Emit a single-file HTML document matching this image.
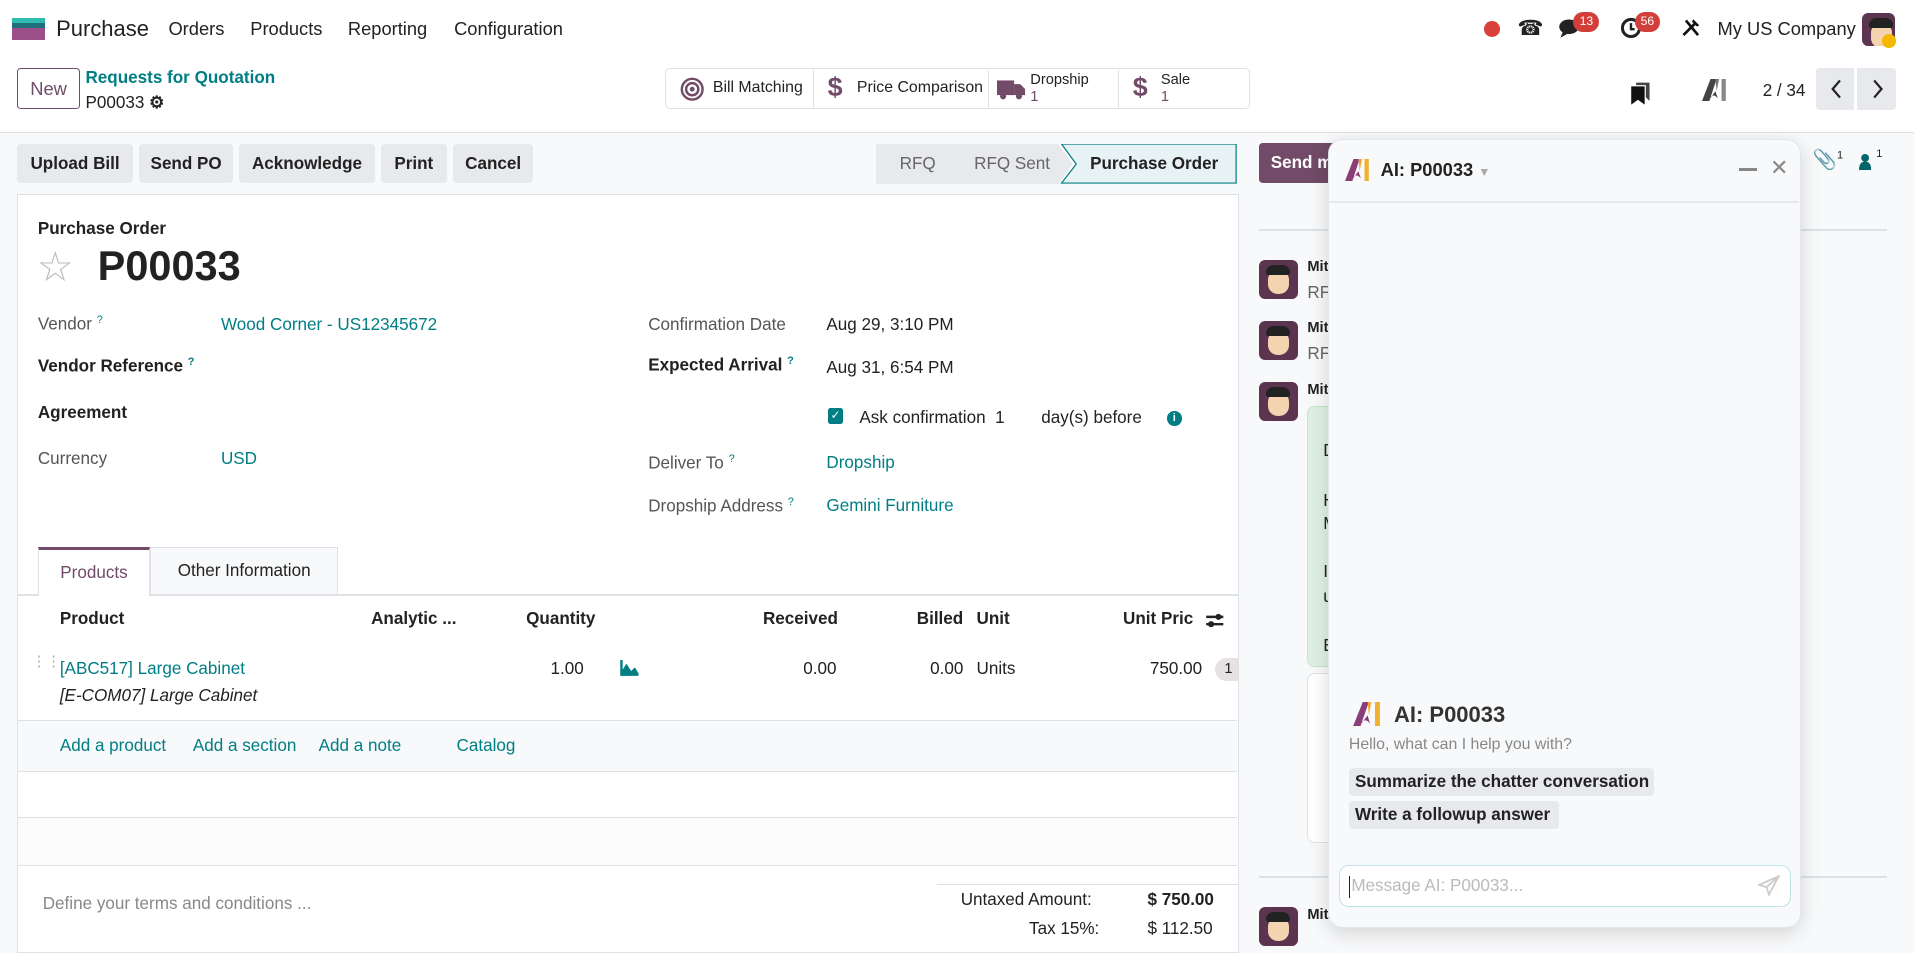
<!DOCTYPE html>
<html><head><meta charset="utf-8"><style>
html{zoom:1.2207}
body{margin:0;width:1568px;height:769px;overflow:hidden;font-family:"Liberation Sans",sans-serif;font-size:14px;color:#222;background:#f8f9fa;position:relative}
.a{position:absolute;white-space:nowrap}
.teal{color:#017e84}
.btn{position:absolute;background:#e7e9ed;border-radius:3px;height:32px;line-height:32px;text-align:center;font-weight:bold;font-size:14px;color:#222}
.lbl{font-weight:bold;color:#444}
.badge{position:absolute;background:#d23f3a;color:#fff;font-size:10px;border-radius:9px;padding:1px 5px;line-height:14px}
.av{position:absolute;width:32px;height:32px;border-radius:5px;background:#5b3550;overflow:hidden}
.av:before{content:"";position:absolute;left:8px;top:8px;width:17px;height:20px;background:#f4d3b0;border-radius:8px}
.av:after{content:"";position:absolute;left:6px;top:4px;width:20px;height:8px;background:#222;border-radius:6px 6px 2px 2px}
</style></head><body>
<div class="a" style="left:0;top:0;width:1568px;height:46px;background:#fff"></div>
<div class="a" style="left:10px;top:15px;width:27px;height:4px;background:#2ebcb0"></div>
<div class="a" style="left:10px;top:19px;width:27px;height:4px;background:#1f6f7a"></div>
<div class="a" style="left:10px;top:23px;width:27px;height:10px;background:#9b4f88"></div>
<div class="a" style="left:46px;top:13px;font-size:18px">Purchase</div>
<div class="a" style="left:138px;top:15px;font-size:15px">Orders</div>
<div class="a" style="left:205px;top:15px;font-size:15px">Products</div>
<div class="a" style="left:285px;top:15px;font-size:15px">Reporting</div>
<div class="a" style="left:372px;top:15px;font-size:15px">Configuration</div>
<div class="a" style="left:1216px;top:17px;width:13px;height:13px;border-radius:50%;background:#d9403a"></div>
<div class="a" style="left:1243px;top:13px;font-size:17px">☎</div>
<svg class="a" style="left:1276px;top:14px" width="20" height="18"><ellipse cx="9" cy="8" rx="8" ry="6" fill="#222"/><path d="M4 12 L2 17 L9 13Z" fill="#222"/></svg>
<div class="badge" style="left:1289px;top:10px">13</div>
<svg class="a" style="left:1327px;top:14px" width="18" height="18"><circle cx="9" cy="9" r="7" fill="none" stroke="#222" stroke-width="2.5"/><path d="M9 5v5h3" stroke="#222" stroke-width="2" fill="none"/></svg>
<div class="badge" style="left:1339px;top:10px">56</div>
<svg class="a" style="left:1377px;top:15px" width="16" height="16"><path d="M2 14L12 4M4 2l10 12" stroke="#111" stroke-width="2.2"/><path d="M10 1l5 5-2 1-4-4z" fill="#111"/></svg>
<div class="a" style="left:1407px;top:15px;font-size:15px">My US Company</div>
<div class="av" style="left:1525px;top:11px;width:27px;height:27px"></div>
<div class="a" style="left:1542px;top:28px;width:11px;height:11px;border-radius:50%;background:#f5b800"></div>
<div class="a" style="left:0;top:46px;width:1568px;height:62px;background:#fff;border-bottom:1px solid #dee2e6"></div>
<div class="a" style="left:14px;top:56px;width:50px;height:32px;border:1px solid #714b67;border-radius:3px;color:#714b67;text-align:center;line-height:32px;font-size:15px">New</div>
<div class="a teal" style="left:70px;top:56px;font-weight:bold">Requests for Quotation</div>
<div class="a" style="left:70px;top:76px">P00033 <b>⚙</b></div>
<div class="a" style="left:545px;top:56px;width:477px;height:32px;border:1px solid #dee2e6;border-radius:4px;background:#fff"></div>
<div class="a" style="left:666px;top:57px;width:1px;height:32px;background:#dee2e6"></div>
<div class="a" style="left:809px;top:57px;width:1px;height:32px;background:#dee2e6"></div>
<div class="a" style="left:916px;top:57px;width:1px;height:32px;background:#dee2e6"></div>
<svg class="a" style="left:557px;top:63px" width="20" height="20"><circle cx="10" cy="10" r="8.5" fill="none" stroke="#714b67" stroke-width="2"/><circle cx="10" cy="10" r="5" fill="none" stroke="#714b67" stroke-width="2"/><circle cx="10" cy="10" r="2" fill="#714b67"/></svg>
<div class="a" style="left:584px;top:65px;font-size:13px">Bill Matching</div>
<div class="a" style="left:678px;top:59px;font-size:22px;font-weight:bold;color:#714b67">$</div>
<div class="a" style="left:702px;top:65px;font-size:13px">Price Comparison</div>
<svg class="a" style="left:817px;top:64px" width="24" height="18"><rect x="0" y="2" width="14" height="12" fill="#714b67"/><path d="M14 5h5l4 4v5h-9z" fill="#714b67"/><circle cx="5" cy="15" r="2.5" fill="#714b67"/><circle cx="18" cy="15" r="2.5" fill="#714b67"/></svg>
<div class="a" style="left:844px;top:59px;font-size:12px;line-height:14px">Dropship<br><span style="color:#714b67">1</span></div>
<div class="a" style="left:928px;top:59px;font-size:22px;font-weight:bold;color:#714b67">$</div>
<div class="a" style="left:951px;top:59px;font-size:12px;line-height:14px">Sale<br><span style="color:#714b67">1</span></div>
<svg class="a" style="left:1335px;top:65px" width="18" height="22"><path d="M5 3h11v15l-3-3V5H5z" fill="#444"/><path d="M1 6h11v15l-5.5-4L1 21z" fill="#111"/></svg>
<svg class="a" style="left:1394px;top:65px" width="22" height="18"><path d="M0 18L7 0h5L6 18Z" fill="#444"/><path d="M5 18c2-5 5-6 8-2l-2-6z" fill="#444"/><path d="M11 0h3l-2 10z" fill="#777"/><rect x="16" y="0" width="3.5" height="18" fill="#888"/></svg>
<div class="a" style="left:1444px;top:66px;font-size:14px">2 / 34</div>
<div class="a" style="left:1488px;top:56px;width:31px;height:34px;background:#e7e9ed;border-radius:3px 0 0 3px"></div>
<div class="a" style="left:1521px;top:56px;width:32px;height:34px;background:#e7e9ed;border-radius:0 3px 3px 0"></div>
<svg class="a" style="left:1498px;top:64px" width="50" height="18"><path d="M9 2L3 9l6 7" fill="none" stroke="#222" stroke-width="1.8"/><path d="M37 2l6 7-6 7" fill="none" stroke="#222" stroke-width="1.8"/></svg>
<div class="btn" style="left:14px;top:118px;width:95px">Upload Bill</div>
<div class="btn" style="left:114px;top:118px;width:77px">Send PO</div>
<div class="btn" style="left:196px;top:118px;width:111px">Acknowledge</div>
<div class="btn" style="left:312px;top:118px;width:54px">Print</div>
<div class="btn" style="left:371px;top:118px;width:66px">Cancel</div>
<svg class="a" style="left:718px;top:118px" width="297" height="33"><path d="M0 0H150L162 16.5 150 33H0Z" fill="#e7e9ed"/><path d="M150 0L162 16.5 150 33" fill="none" stroke="#fff" stroke-width="1"/><path d="M152 0H295V32H152L164 16.5Z" fill="#e6f2f3" stroke="#017e84"/></svg>
<div class="a" style="left:737px;top:126px;color:#666">RFQ</div>
<div class="a" style="left:798px;top:126px;color:#666">RFQ Sent</div>
<div class="a" style="left:893px;top:126px;font-weight:bold">Purchase Order</div>
<div class="a" style="left:14px;top:159px;width:999px;height:620px;background:#fff;border:1px solid #dee2e6"></div>
<div class="a" style="left:31px;top:179px;font-weight:bold">Purchase Order</div>
<div class="a" style="left:30px;top:198px;font-size:34px;color:#bbb">☆</div>
<div class="a" style="left:80px;top:198px;font-size:34px;font-weight:bold">P00033</div>
<div class="a" style="left:31px;top:257px;color:#555">Vendor <sup class="teal" style="font-size:9px">?</sup></div>
<div class="a teal" style="left:181px;top:258px">Wood Corner - US12345672</div>
<div class="a lbl" style="left:31px;top:292px;color:#222">Vendor Reference <sup class="teal" style="font-size:9px">?</sup></div>
<div class="a lbl" style="left:31px;top:330px;color:#222">Agreement</div>
<div class="a" style="left:31px;top:368px;color:#555">Currency</div>
<div class="a teal" style="left:181px;top:368px">USD</div>
<div class="a" style="left:531px;top:258px;color:#555">Confirmation Date</div>
<div class="a" style="left:677px;top:258px">Aug 29, 3:10 PM</div>
<div class="a" style="left:531px;top:291px;font-weight:bold">Expected Arrival <sup class="teal" style="font-size:9px">?</sup></div>
<div class="a" style="left:677px;top:293px">Aug 31, 6:54 PM</div>
<div class="a" style="left:678px;top:334px;width:13px;height:13px;background:#017e84;border-radius:2px;color:#fff;font-size:10px;line-height:13px;text-align:center">✓</div>
<div class="a" style="left:704px;top:334px">Ask confirmation&nbsp; 1</div>
<div class="a" style="left:853px;top:334px">day(s) before</div>
<div class="a" style="left:956px;top:337px;width:12px;height:12px;border-radius:50%;background:#017e84;color:#fff;font-size:9px;line-height:12px;text-align:center;font-weight:bold">i</div>
<div class="a" style="left:531px;top:371px;color:#555">Deliver To <sup class="teal" style="font-size:9px">?</sup></div>
<div class="a teal" style="left:677px;top:371px">Dropship</div>
<div class="a" style="left:531px;top:406px;color:#555">Dropship Address <sup class="teal" style="font-size:9px">?</sup></div>
<div class="a teal" style="left:677px;top:406px">Gemini Furniture</div>
<div class="a" style="left:14px;top:487px;width:1000px;height:1px;background:#dee2e6"></div>
<div class="a" style="left:31px;top:448px;width:92px;height:40px;background:#fff;border-top:3px solid #714b67;border-left:1px solid #dee2e6;border-right:1px solid #dee2e6;box-sizing:border-box;text-align:center;line-height:38px;color:#714b67">Products</div>
<div class="a" style="left:123px;top:448px;width:154px;height:39px;background:#f8f9fa;border:1px solid #dee2e6;border-bottom:none;box-sizing:border-box;text-align:center;line-height:38px">Other Information</div>
<div class="a" style="left:49px;top:499px;font-weight:bold">Product</div>
<div class="a" style="left:304px;top:499px;font-weight:bold">Analytic ...</div>
<div class="a" style="left:431px;top:499px;font-weight:bold">Quantity</div>
<div class="a" style="left:625px;top:499px;font-weight:bold">Received</div>
<div class="a" style="left:751px;top:499px;font-weight:bold">Billed</div>
<div class="a" style="left:800px;top:499px;font-weight:bold">Unit</div>
<div class="a" style="left:920px;top:499px;font-weight:bold">Unit Pric</div>
<svg class="a" style="left:987px;top:501px" width="16" height="14"><path d="M1 4h14M1 10h14" stroke="#222" stroke-width="2"/><circle cx="11" cy="4" r="2.5" fill="#222"/><circle cx="5" cy="10" r="2.5" fill="#222"/></svg>
<div class="a" style="left:26px;top:540px;color:#aaa;font-size:12px;line-height:6px">⋮⋮</div>
<div class="a teal" style="left:49px;top:540px">[ABC517] Large Cabinet</div>
<div class="a" style="left:49px;top:562px;font-style:italic">[E-COM07] Large Cabinet</div>
<div class="a" style="left:451px;top:540px">1.00</div>
<svg class="a" style="left:507px;top:541px" width="17" height="14"><path d="M1 0V13H16V11L13 6 10 9 6 3 3 8V0Z" fill="#017e84"/></svg>
<div class="a" style="left:658px;top:540px">0.00</div>
<div class="a" style="left:762px;top:540px">0.00</div>
<div class="a" style="left:800px;top:540px">Units</div>
<div class="a" style="left:942px;top:540px">750.00</div>
<div class="a" style="left:995px;top:539px;width:19px;height:19px;background:#e7e2e2;border-radius:10px 0 0 10px;font-size:12px;line-height:19px;padding-left:8px;box-sizing:border-box">1</div>
<div class="a" style="left:15px;top:590px;width:998px;height:41px;background:#f8f9fa;border-top:1px solid #dee2e6;border-bottom:1px solid #dee2e6"></div>
<div class="a teal" style="left:49px;top:603px">Add a product</div>
<div class="a teal" style="left:158px;top:603px">Add a section</div>
<div class="a teal" style="left:261px;top:603px">Add a note</div>
<div class="a teal" style="left:374px;top:603px">Catalog</div>
<div class="a" style="left:15px;top:669px;width:998px;height:39px;background:#fbfbfb;border-top:1px solid #dee2e6;border-bottom:1px solid #dee2e6"></div>
<div class="a" style="left:35px;top:732px;color:#888">Define your terms and conditions ...</div>
<div class="a" style="left:768px;top:724px;width:246px;height:1px;background:#dee2e6"></div>
<div class="a" style="left:787px;top:729px">Untaxed Amount:</div>
<div class="a" style="left:940px;top:729px;font-weight:bold">$ 750.00</div>
<div class="a" style="left:843px;top:753px">Tax 15%:</div>
<div class="a" style="left:940px;top:753px">$ 112.50</div>
<div class="a" style="left:1031px;top:117px;width:64px;height:33px;background:#714b67;border-radius:3px;color:#fff;font-weight:bold;line-height:33px;padding-left:10px;box-sizing:border-box;overflow:hidden">Send m</div>
<div class="a" style="left:1485px;top:121px;font-size:16px;color:#555">📎<sup style="font-size:9px;color:#222">1</sup></div>
<svg class="a" style="left:1523px;top:125px" width="10" height="14"><circle cx="5" cy="4" r="3.2" fill="#01666b"/><path d="M0 14c0-5 2-7 5-7s5 2 5 7z" fill="#01666b"/></svg>
<div class="a" style="left:1537px;top:121px;font-size:9px">1</div>
<div class="a" style="left:1031px;top:188px;width:515px;height:1px;background:#dee2e6"></div>
<div class="av" style="left:1031px;top:213px"></div>
<div class="a" style="left:1071px;top:212px;font-weight:bold;font-size:12px">Mitc</div>
<div class="a" style="left:1071px;top:232px;color:#666">RF</div>
<div class="av" style="left:1031px;top:263px"></div>
<div class="a" style="left:1071px;top:262px;font-weight:bold;font-size:12px">Mitc</div>
<div class="a" style="left:1071px;top:282px;color:#666">RF</div>
<div class="av" style="left:1031px;top:313px"></div>
<div class="a" style="left:1071px;top:313px;font-weight:bold;font-size:12px">Mitc</div>
<div class="a" style="left:1071px;top:333px;width:30px;height:212px;background:#dff0e2;border:1px solid #c5e6cc;border-radius:6px"></div>
<div class="a" style="left:1084px;top:361px">D</div>
<div class="a" style="left:1084px;top:402px">H</div>
<div class="a" style="left:1084px;top:421px">M</div>
<div class="a" style="left:1084px;top:460px">I</div>
<div class="a" style="left:1084px;top:481px">u</div>
<div class="a" style="left:1084px;top:521px">E</div>
<div class="a" style="left:1071px;top:551px;width:30px;height:138px;background:#fff;border:1px solid #dee2e6;border-radius:6px"></div>
<div class="a" style="left:1031px;top:718px;width:515px;height:1px;background:#dee2e6"></div>
<div class="av" style="left:1031px;top:743px"></div>
<div class="a" style="left:1071px;top:743px;font-weight:bold;font-size:12px">Mitc</div>
<div class="a" style="left:1088px;top:114px;width:387px;height:646px;background:#f8f9fa;border:1px solid #e3e5e8;border-radius:12px;box-shadow:0 4px 16px rgba(0,0,0,.15);box-sizing:border-box"></div>
<div class="a" style="left:1089px;top:165px;width:385px;height:1px;background:#e6e8eb"></div>
<svg class="a" style="left:1102px;top:130px" width="22" height="18"><path d="M0 18L7 0h5L6 18Z" fill="#8b3d7a"/><path d="M5 18c2-5 5-6 8-2l-2-6z" fill="#8b3d7a"/><path d="M11 0h3l-2 10z" fill="#f0a92e"/><rect x="16" y="0" width="3.5" height="18" fill="#f0b030"/></svg>
<div class="a" style="left:1131px;top:130px;font-size:15px;font-weight:bold">AI: P00033 <span style="color:#aaa;font-size:10px">▼</span></div>
<div class="a" style="left:1425px;top:138px;width:14px;height:2px;background:#888"></div>
<div class="a" style="left:1450px;top:127px;font-size:18px;color:#888">✕</div>
<svg class="a" style="left:1108px;top:575px" width="24" height="20"><path d="M0 20L8 0h5L6 20Z" fill="#8b3d7a"/><path d="M5 20c2-5 6-7 9-2l-2-7z" fill="#8b3d7a"/><path d="M12 0h3l-2 11z" fill="#f0a92e"/><rect x="18" y="0" width="4" height="20" fill="#f0b030"/></svg>
<div class="a" style="left:1142px;top:575px;font-size:18px;font-weight:bold;color:#333">AI: P00033</div>
<div class="a" style="left:1105px;top:603px;font-size:13px;color:#888">Hello, what can I help you with?</div>
<div class="a" style="left:1105px;top:629px;width:250px;height:23px;background:#e7e9ed;border-radius:3px;font-weight:bold;line-height:23px;padding-left:5px;box-sizing:border-box">Summarize the chatter conversation</div>
<div class="a" style="left:1105px;top:656px;width:172px;height:23px;background:#e7e9ed;border-radius:3px;font-weight:bold;line-height:23px;padding-left:5px;box-sizing:border-box">Write a followup answer</div>
<div class="a" style="left:1097px;top:709px;width:370px;height:34px;background:#fff;border:1px solid #bfe3e3;border-radius:8px;box-sizing:border-box"></div>
<div class="a" style="left:1105px;top:718px;width:1px;height:18px;background:#222"></div>
<div class="a" style="left:1107px;top:718px;color:#bbb">Message AI: P00033...</div>
<svg class="a" style="left:1440px;top:717px" width="18" height="18"><path d="M17 1L1 8l6 2 2 6z M7 10L17 1" fill="none" stroke="#ccc" stroke-width="1.5"/></svg>
</body></html>
